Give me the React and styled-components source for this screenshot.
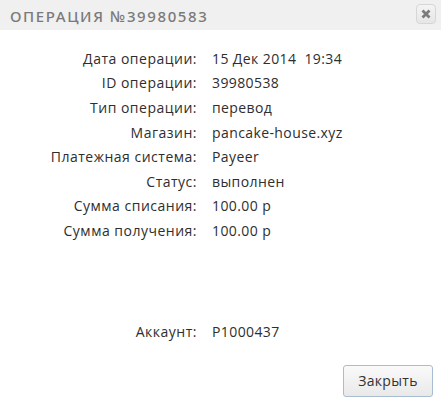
import React from 'react'
import styled, { createGlobalStyle } from 'styled-components'

const Global = createGlobalStyle`
  html, body { margin: 0; padding: 0; background: #fff; }
  body { font-family: "Open Sans", "Liberation Sans", sans-serif; }
`

const Dialog = styled.div`
  width: 441px;
  height: 402px;
  display: flex;
  flex-direction: column;
  background: #fff;
  overflow: hidden;
`

const Header = styled.div`
  flex-shrink: 0;
  height: 30px;
  background: #f0f0f0;
  display: flex;
  align-items: center;
  justify-content: space-between;
  padding: 0 5px 0 10px;
  box-sizing: border-box;
`

const Title = styled.div`
  font-family: "Noto Sans", "DejaVu Sans", sans-serif;
  font-size: 15px;
  letter-spacing: 1.6px;
  color: #7a7a7a;
  font-weight: 500;
  padding-top: 1px;
`

const CloseBtn = styled.button`
  width: 20px;
  height: 20px;
  margin-top: -2px;
  padding: 0;
  border: 1px solid #d6d6d6;
  border-radius: 4px;
  background: linear-gradient(#f4f4f4, #e6e6e6);
  display: flex;
  align-items: center;
  justify-content: center;
  cursor: pointer;
`

const Body = styled.div`
  display: flex;
  flex-direction: column;
  padding-top: 16px;
`

const Grid = styled.div`
  display: grid;
  grid-template-columns: 197px 1fr;
  column-gap: 15px;
  grid-auto-rows: ${p => p.$row || 25}px;
  align-items: center;
  margin-top: ${p => p.$top || 0}px;
`

const Label = styled.div`
  text-align: right;
  font-size: 14px;
  letter-spacing: 0.5px;
  color: #2e2e2e;
  white-space: nowrap;
`

const Value = styled.div`
  font-size: 14px;
  letter-spacing: 0.4px;
  color: #2e2e2e;
  white-space: pre;
`

const Footer = styled.div`
  display: flex;
  justify-content: flex-end;
  padding: 21px 8px 0 0;
`

const Button = styled.button`
  width: 90px;
  height: 32px;
  border: 1px solid #a8bcd4;
  border-radius: 3px;
  background: linear-gradient(#fafafa, #e9e9e9);
  font-family: "Open Sans", "Liberation Sans", sans-serif;
  font-size: 14px;
  letter-spacing: 0.3px;
  color: #333;
  cursor: pointer;
`

const rows = [
  ['Дата операции:', '15 Дек 2014  19:34'],
  ['ID операции:', '39980538'],
  ['Тип операции:', 'перевод'],
  ['Магазин:', 'pancake-house.xyz'],
  ['Платежная система:', 'Payeer'],
  ['Статус:', 'выполнен'],
  ['Сумма списания:', '100.00 р'],
  ['Сумма получения:', '100.00 р'],
]

export default function App() {
  return (
    <Dialog>
      <Global />
      <Header>
        <Title>ОПЕРАЦИЯ №39980583</Title>
        <CloseBtn aria-label="close">
          <svg width="10" height="10" viewBox="0 0 10 10">
            <path d="M1.5 1.5 L8.5 8.5 M8.5 1.5 L1.5 8.5" stroke="#7b7b7b" strokeWidth="2.8" />
          </svg>
        </CloseBtn>
      </Header>
      <Body>
        <Grid $row={24.6}>
          {rows.map(([l, v]) => (
            <React.Fragment key={l}>
              <Label>{l}</Label>
              <Value>{v}</Value>
            </React.Fragment>
          ))}
        </Grid>
        <Grid $top={76}>
          <Label>Аккаунт:</Label>
          <Value>P1000437</Value>
        </Grid>
        <Footer>
          <Button>Закрыть</Button>
        </Footer>
      </Body>
    </Dialog>
  )
}
